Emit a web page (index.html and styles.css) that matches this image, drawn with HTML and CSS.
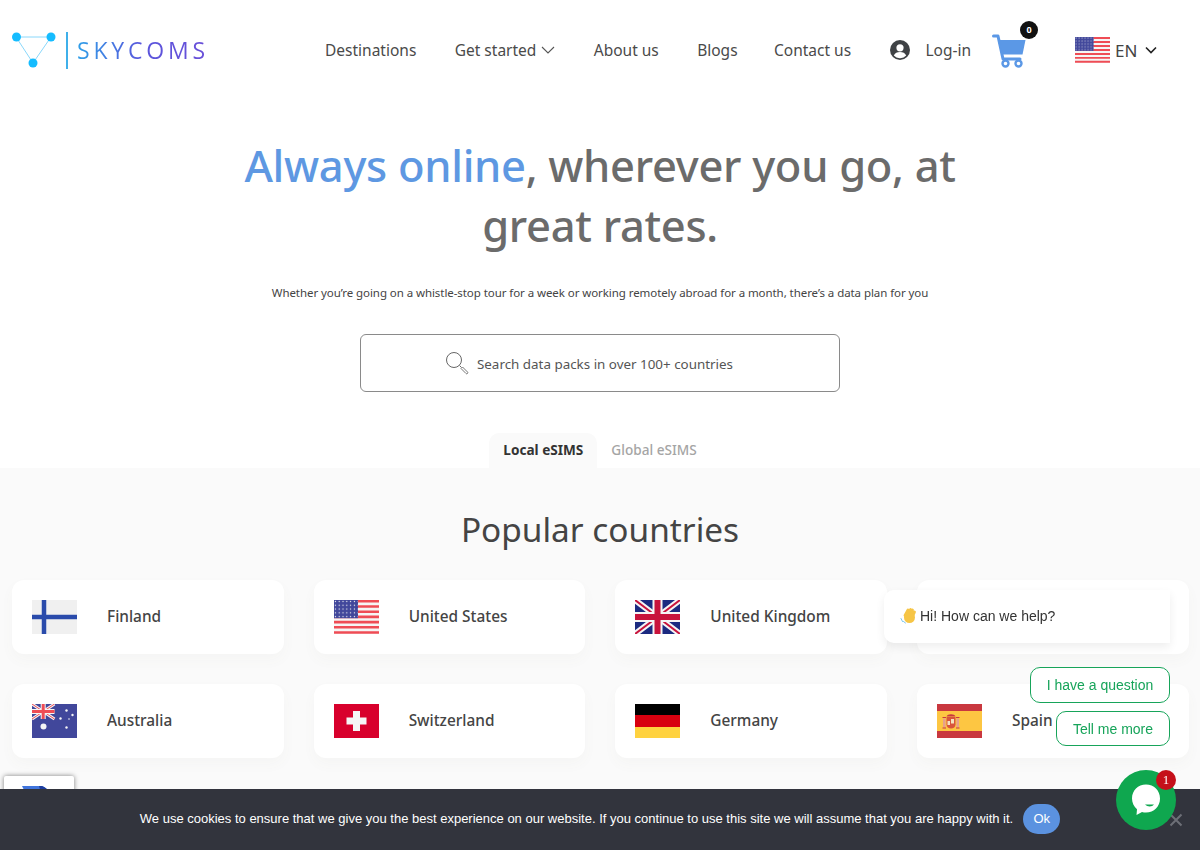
FILE: index.html
```html
<!DOCTYPE html>
<html lang="en">
<head>
<meta charset="utf-8">
<title>Skycoms</title>
<link rel="stylesheet" href="styles.css">
</head>
<body>
<svg class="defs" width="0" height="0" aria-hidden="true">
  <defs>
    <pattern id="stars" width="3.8" height="3.8" patternUnits="userSpaceOnUse"><rect width="3.8" height="3.8" fill="#41479b"/><circle cx="1.4" cy="1.4" r=".65" fill="#f5f5f5"/></pattern>
    <g id="flag-us">
      <rect width="45" height="34" fill="#f5f5f5"/>
      <path d="M0 1.3h45M0 6.5h45M0 11.7h45M0 16.9h45M0 22.1h45M0 27.3h45M0 32.5h45" stroke="#ef4c55" stroke-width="2.6"/>
      <rect width="24" height="18.2" fill="url(#stars)"/>
    </g>
    <g id="flag-uk">
      <rect width="45" height="34" fill="#1b2a80"/>
      <path d="M0 0L45 34M45 0L0 34" stroke="#f5f5f5" stroke-width="6"/>
      <path d="M0 0L22.5 17M45 0L22.5 17M45 34L22.5 17M0 34L22.5 17" stroke="#c8133c" stroke-width="2"/>
      <path d="M22.5 0V34M0 17H45" stroke="#f5f5f5" stroke-width="10"/>
      <path d="M22.5 0V34M0 17H45" stroke="#c8133c" stroke-width="6"/>
    </g>
  </defs>
</svg>

<header class="site-header">
  <a class="logo" href="#">
    <svg class="logo-mark" width="44" height="38" viewBox="0 0 44 38">
      <path d="M4 6H39L21 32Z" fill="none" stroke="#8ad8fb" stroke-width="1"/>
      <circle cx="4.500" cy="6" r="4.500" fill="#15bcff"/>
      <circle cx="39" cy="6" r="4.500" fill="#15bcff"/>
      <circle cx="21" cy="32" r="4.500" fill="#15bcff"/>
    </svg>
    <span class="logo-rule"></span>
    <span class="logo-text">SKYCOMS</span>
  </a>
  <nav class="main-nav">
    <a href="#">Destinations</a>
    <a href="#" class="with-caret">Get started
      <svg width="14" height="8" viewBox="0 0 14 8"><path d="M1 1l6 6 6-6" fill="none" stroke="#555" stroke-width="1.100"/></svg>
    </a>
    <a href="#">About us</a>
    <a href="#">Blogs</a>
    <a href="#" class="contact">Contact us</a>
    <a href="#" class="login">
      <svg width="20" height="20" viewBox="0 0 20 20"><circle cx="10" cy="10" r="10" fill="#3f4245"/><circle cx="10" cy="7.800" r="3.600" fill="#fff"/><path d="M3.800 15.600c1-2.600 3.400-3.600 6.200-3.600s5.200 1 6.200 3.600A8.200 8.200 0 0 1 10 18.200a8.200 8.200 0 0 1-6.200-2.600z" fill="#fff"/></svg>
      <span>Log-in</span>
    </a>
  </nav>
  <a class="cart" href="#">
    <svg width="34" height="34" viewBox="0 0 34 34"><path d="M1.500 2h4.500l5 23h17" fill="none" stroke="#5b98e6" stroke-width="3" stroke-linecap="round" stroke-linejoin="round"/><path d="M7 6h26.500l-3 14.500H10.500z" fill="#5b98e6"/><circle cx="13.500" cy="29.500" r="3" fill="#fff" stroke="#5b98e6" stroke-width="2.400"/><circle cx="26.500" cy="29.500" r="3" fill="#fff" stroke="#5b98e6" stroke-width="2.400"/></svg>
    <span class="cart-badge">0</span>
  </a>
  <div class="lang">
    <svg width="35" height="26" viewBox="0 0 45 34" preserveAspectRatio="none"><use href="#flag-us"/></svg>
    <span>EN</span>
    <svg width="12" height="8" viewBox="0 0 12 8"><path d="M1 1.500l5 5 5-5" fill="none" stroke="#222" stroke-width="1.600"/></svg>
  </div>
</header>

<main>
  <section class="hero">
    <h1><span class="accent">Always online</span>, wherever you go, at great rates.</h1>
    <p class="lead">Whether you’re going on a whistle-stop tour for a week or working remotely abroad for a month, there’s a data plan for you</p>
    <div class="search">
      <svg width="24" height="24" viewBox="0 0 24 24"><circle cx="9" cy="9" r="7.500" fill="none" stroke="#666" stroke-width="1"/><path d="M14.500 14.500l2 2" stroke="#666" stroke-width="1"/><path d="M16 17.500l1.500-1.500 5 5a1 1 0 0 1-1.500 1.500z" fill="none" stroke="#777" stroke-width="1"/></svg>
      <span>Search data packs in over 100+ countries</span>
    </div>
    <div class="tabs">
      <span class="tab active">Local eSIMS</span>
      <span class="tab">Global eSIMS</span>
    </div>
  </section>

  <section class="popular">
    <h2>Popular countries</h2>
    <div class="country-grid">
      <a class="card" href="#">
        <svg class="flag" viewBox="0 0 45 34"><rect width="45" height="34" fill="#f0f0f0"/><path d="M12 0V34M0 17H45" stroke="#2a4bab" stroke-width="4.500"/></svg>
        <span>Finland</span>
      </a>
      <a class="card" href="#">
        <svg class="flag" viewBox="0 0 45 34"><use href="#flag-us"/></svg>
        <span>United States</span>
      </a>
      <a class="card" href="#">
        <svg class="flag" viewBox="0 0 45 34"><use href="#flag-uk"/></svg>
        <span>United Kingdom</span>
      </a>
      <div class="card"></div>
      <a class="card" href="#">
        <svg class="flag" viewBox="0 0 45 34">
          <rect width="45" height="34" fill="#41479b"/>
          <path d="M0 0L22.500 15M22.500 0L0 15" stroke="#f5f5f5" stroke-width="3"/>
          <path d="M0 0L22.500 15M22.500 0L0 15" stroke="#ef4c55" stroke-width="1"/>
          <path d="M11.200 0V15M0 7.500H22.500" stroke="#f5f5f5" stroke-width="5"/>
          <path d="M11.200 0V15M0 7.500H22.500" stroke="#ef4c55" stroke-width="3"/>
          <circle cx="11.500" cy="22.500" r="3" fill="#f5f5f5"/>
          <circle cx="34.500" cy="6.500" r="1.200" fill="#f5f5f5"/><circle cx="40.500" cy="11" r="1.200" fill="#f5f5f5"/>
          <circle cx="28.500" cy="14.500" r="1.200" fill="#f5f5f5"/><circle cx="37" cy="15" r=".8" fill="#f5f5f5"/>
          <circle cx="34.500" cy="23.500" r="1.200" fill="#f5f5f5"/>
        </svg>
        <span>Australia</span>
      </a>
      <a class="card" href="#">
        <svg class="flag" viewBox="0 0 45 34"><rect width="45" height="34" fill="#d8002c"/><path d="M19 7h7v6.500h6.500v7H26V27h-7v-6.500h-6.500v-7H19z" fill="#f5f5f5"/></svg>
        <span>Switzerland</span>
      </a>
      <a class="card" href="#">
        <svg class="flag" viewBox="0 0 45 34"><rect width="45" height="11" fill="#000"/><rect y="11" width="45" height="12" fill="#d8000f"/><rect y="23" width="45" height="11" fill="#ffd23f"/></svg>
        <span>Germany</span>
      </a>
      <a class="card" href="#">
        <svg class="flag" viewBox="0 0 45 34">
          <rect width="45" height="34" fill="#c9383f"/>
          <rect y="7" width="45" height="20" fill="#fdc642"/>
          <path d="M6 14.500h2.500v9H6zM19.500 14.500H22v9h-2.500z" fill="#e8a08c"/>
          <path d="M5.500 13.500h3.500M19 13.500h3.500M5.500 24h3.500M19 24h3.500" stroke="#c9383f" stroke-width="1"/>
          <path d="M9.500 13h9v7.500c0 2.500-2 4-4.500 4s-4.500-1.500-4.500-4z" fill="#d9543c"/>
          <rect x="14" y="15" width="3" height="4.500" fill="#f3e2c0"/>
          <path d="M10.500 17h2.500v4h-2.500z" fill="#f3e2c0"/>
          <path d="M9.500 12.500c1-3 8-3 9 0z" fill="#c9383f"/>
        </svg>
        <span>Spain</span>
      </a>
    </div>
  </section>
</main>

<div class="recaptcha"><svg width="42" height="14" viewBox="0 0 42 14"><path d="M7 14L0 0h20c6 2 9 8 10 14z" fill="#3f74dc"/><path d="M17 0h3c6 2 9 8 10 14h-9z" fill="#1d3d9e"/></svg></div>

<aside class="chat">
  <div class="chat-bubble">
    <svg width="17" height="17" viewBox="0 0 17 17">
      <path d="M5 8.500L8 3M7 10L10.500 2.500M9 11L12.500 3M11 12L14.500 5" stroke="#f6c546" stroke-width="2.800" stroke-linecap="round"/>
      <ellipse cx="9.500" cy="10.500" rx="5.500" ry="5.500" fill="#f6c546"/>
      <path d="M1 11.500l1.500 3M3.500 14.500L5.500 16" stroke="#7cc5ec" stroke-width="1" stroke-linecap="round"/>
    </svg>
    <span>Hi! How can we help?</span>
  </div>
  <button class="chat-btn">I have a question</button>
  <button class="chat-btn tell">Tell me more</button>
</aside>

<div class="cookie-bar">
  <span>We use cookies to ensure that we give you the best experience on our website. If you continue to use this site we will assume that you are happy with it.</span>
  <button class="cookie-ok">Ok</button>
  <svg class="cookie-x" width="14" height="14" viewBox="0 0 14 14"><path d="M1.500 1.500l11 11M12.500 1.500l-11 11" stroke="#6d6f77" stroke-width="2"/></svg>
</div>

<div class="chat-launcher">
  <svg width="34" height="36" viewBox="0 0 34 36"><path d="M17 2.500c8 0 14 6 14 14s-6 14-14 14c-1.400 0-2.700-.2-4-.6L7.500 33l.5-5.800C4.900 24.600 3 20.800 3 16.500c0-8 6-14 14-14z" fill="#fff"/><path d="M16 22.500c2.500 2.500 7 2.500 9 0z" fill="#0fa74f"/></svg>
  <span class="chat-count">1</span>
</div>
</body>
</html>
```
FILE: styles.css
```css
* { box-sizing: border-box; }
html, body { margin: 0; padding: 0; }
body {
  font-family: "Noto Sans", "Open Sans", sans-serif;
  color: #444;
  background: #fff;
  height: 850px;
  overflow: hidden;
}
a { color: inherit; text-decoration: none; }
.defs { position: absolute; }

.site-header {
  display: flex;
  align-items: center;
  height: 100px;
  padding: 0 0 0 12px;
}
.logo { display: flex; align-items: center; flex: none; width: 195px; }
.logo-mark { flex: none; }
.logo-rule { flex: none; width: 2px; height: 37px; margin-left: 10px; background: #3fb0ea; }
.logo-text {
  flex: none;
  margin-left: 9px;
  font-family: "Open Sans", sans-serif;
  font-size: 23px;
  font-weight: 500;
  letter-spacing: 3.8px;
  background: linear-gradient(90deg, #2f9fe8 0%, #5a55dc 50%, #6a4fd8 100%);
  -webkit-background-clip: text;
  background-clip: text;
  color: transparent;
}
.main-nav {
  display: flex;
  align-items: center;
  gap: 38.4px;
  margin-left: 118px;
  font-size: 15.5px;
  color: #4a4a4a;
}
.with-caret { display: flex; align-items: center; gap: 5px; }
.contact { margin-left: -2px; }
.login { display: flex; align-items: center; gap: 16px; }
.cart { position: relative; display: flex; margin-left: 21px; margin-top: 1px; }
.cart-badge {
  position: absolute;
  left: 28px;
  top: -13px;
  width: 18px;
  height: 18px;
  border-radius: 50%;
  background: #111;
  color: #fff;
  font-size: 9px;
  font-weight: 700;
  line-height: 18px;
  text-align: center;
}
.lang {
  display: flex;
  align-items: center;
  margin-left: 49px;
  font-size: 17px;
  color: #444;
}
.lang span { margin-left: 5px; margin-right: 8px; }

.hero { display: flex; flex-direction: column; align-items: center; }
.hero h1 {
  width: 760px;
  margin: 35px 0 0;
  font-size: 43.5px;
  line-height: 60px;
  font-weight: 500;
  letter-spacing: -.3px;
  color: #6b6b6b;
  text-align: center;
}
.accent { color: #5e98e2; }
.lead {
  margin: 29px 0 0;
  font-size: 11.5px;
  line-height: 18px;
  letter-spacing: -.07px;
  color: #444;
}
.search {
  display: flex;
  align-items: center;
  justify-content: center;
  gap: 8px;
  width: 480px;
  height: 58px;
  margin-top: 32px;
  padding-right: 22px;
  border: 1px solid #8a8a8a;
  border-radius: 6px;
  font-size: 13.4px;
  color: #555;
}
.search span { padding-top: 2px; }
.tabs { display: flex; margin-top: 41px; }
.tab {
  height: 35px;
  padding: 0 14px;
  font-size: 13.6px;
  font-weight: 500;
  line-height: 34px;
  color: #a5a5a5;
  border-radius: 10px 10px 0 0;
}
.tab.active { background: #fafafa; color: #333; font-weight: 700; }

.popular { height: 382px; padding: 0 12px; background: #fafafa; }
.popular h2 {
  margin: 0;
  padding-top: 38px;
  font-size: 33.4px;
  line-height: 46px;
  font-weight: 400;
  color: #444;
  text-align: center;
}
.country-grid {
  display: grid;
  grid-template-columns: repeat(4, 271.67px);
  gap: 30px;
  margin-top: 28px;
}
.card {
  display: flex;
  align-items: center;
  gap: 30px;
  height: 74px;
  padding-left: 20px;
  background: #fff;
  border-radius: 12px;
  box-shadow: 0 6px 14px rgba(120, 100, 90, .035);
  font-size: 15.4px;
  font-weight: 500;
  color: #444;
}
.card span { margin-bottom: 2px; }
.flag { width: 45px; height: 34px; flex: none; }

.recaptcha {
  position: fixed;
  left: 4px;
  top: 776px;
  width: 70px;
  height: 60px;
  padding: 10px 0 0 18px;
  background: #fff;
  border-radius: 2px;
  box-shadow: 0 0 5px rgba(0, 0, 0, .5);
}
.recaptcha svg { display: block; }

.chat {
  position: fixed;
  left: 884px;
  top: 590px;
  width: 286px;
  display: flex;
  flex-direction: column;
  align-items: flex-end;
  font-family: "Liberation Sans", Arial, sans-serif;
}
.chat-bubble {
  display: flex;
  align-items: center;
  gap: 3px;
  width: 100%;
  height: 53px;
  padding: 0 0 2px 16px;
  background: #fff;
  border-radius: 10px 0 0 10px;
  box-shadow: 0 4px 10px rgba(0, 0, 0, .07);
  font-size: 14px;
  color: #333;
}
.chat-btn {
  width: 140px;
  height: 36px;
  margin-top: 24px;
  padding: 0;
  background: #fff;
  border: 1px solid #17a45a;
  border-radius: 10px;
  color: #17a45a;
  font-family: inherit;
  font-size: 14px;
}
.chat-btn.tell { width: 114px; height: 35px; margin-top: 8px; }

.cookie-bar {
  position: fixed;
  left: 0;
  right: 0;
  bottom: 0;
  height: 61px;
  padding-bottom: 2px;
  display: flex;
  align-items: center;
  justify-content: center;
  gap: 10px;
  background: #32343d;
  color: #fff;
  font-family: "Liberation Sans", Arial, sans-serif;
  font-size: 13px;
}
.cookie-ok {
  width: 37px;
  height: 30px;
  padding: 0;
  border: 0;
  border-radius: 15px;
  background: #5b92e0;
  color: #fff;
  font-family: inherit;
  font-size: 13px;
}
.cookie-x { position: absolute; left: 1169px; top: 24px; }

.chat-launcher {
  position: fixed;
  left: 1116px;
  top: 770px;
  width: 60px;
  height: 60px;
  display: flex;
  align-items: center;
  justify-content: center;
  border-radius: 50%;
  background: #0fa74f;
}
.chat-count {
  position: absolute;
  left: 40px;
  top: 0;
  width: 20px;
  height: 20px;
  border-radius: 50%;
  background: #c5101a;
  color: #fff;
  font-family: "Liberation Serif", serif;
  font-size: 13px;
  line-height: 20px;
  text-align: center;
}
```
